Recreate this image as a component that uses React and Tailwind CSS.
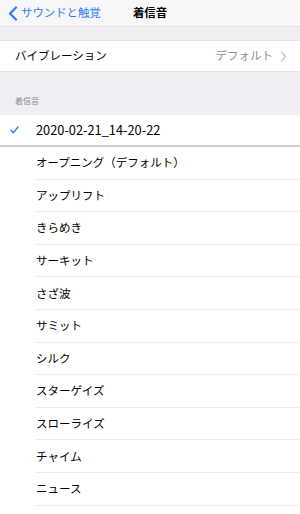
import React from 'react';

const tones = [
  'オープニング（デフォルト）',
  'アップリフト',
  'きらめき',
  'サーキット',
  'さざ波',
  'サミット',
  'シルク',
  'スターゲイズ',
  'スローライズ',
  'チャイム',
  'ニュース',
];

export default function App() {
  return (
    <div
      className="w-[300px] h-[514px] overflow-hidden bg-[#efeff4] text-black flex flex-col"
      style={{ fontFamily: '"Noto Sans CJK JP", "Noto Sans", sans-serif' }}
    >
      {/* nav bar */}
      <div className="relative h-[27px] shrink-0 bg-[#f7f7f7] border-b border-[#e2e2e6] flex items-center">
        <div className="flex items-center pl-[8px] text-[#2f7cf6] text-[11.4px] leading-none">
          <svg width="10" height="15" viewBox="0 0 10 15" className="mr-[3px]">
            <path d="M8 1.5 L2 7.5 L8 13.5" fill="none" stroke="#2f7cf6" strokeWidth="2.2" strokeLinecap="round" strokeLinejoin="round" />
          </svg>
          <span>サウンドと触覚</span>
        </div>
        <div className="absolute left-0 right-0 text-center text-[11.4px] font-bold leading-none pointer-events-none">着信音</div>
      </div>

      <div className="h-[13px] shrink-0" />

      {/* vibration */}
      <div className="h-[32px] shrink-0 bg-white border-y border-[#e4e4e8] flex items-center pl-[15px] pr-[13px]">
        <span className="text-[11.5px] flex-1">バイブレーション</span>
        <span className="text-[11.5px] text-[#8e8e93]">デフォルト</span>
        <svg width="7" height="11" viewBox="0 0 7 11" className="ml-[7px]">
          <path d="M1.5 1 L5.5 5.5 L1.5 10" fill="none" stroke="#c4c4c8" strokeWidth="1.3" strokeLinecap="round" strokeLinejoin="round" />
        </svg>
      </div>

      {/* section header */}
      <div className="h-[43px] shrink-0 flex items-end pl-[15px] pb-[10px]">
        <span className="text-[8px] text-[#8a8a8e] leading-none">着信音</span>
      </div>

      {/* list */}
      <div className="bg-white flex-1">
        <div className="h-[32px] flex items-center border-b-2 border-[#cfcfd3]">
          <div className="w-[36px] flex justify-center pr-[7px]">
            <svg width="9" height="8" viewBox="0 0 9 8">
              <path d="M1 4.3 L3.4 6.8 L8 1" fill="none" stroke="#2f7cf6" strokeWidth="1.4" strokeLinecap="round" strokeLinejoin="round" />
            </svg>
          </div>
          <span className="text-[12.8px]">2020-02-21_14-20-22</span>
        </div>
        {tones.map((t) => (
          <div key={t} className="pl-[36px]">
            <div className="h-[32.6px] flex items-center border-b border-[#ececee] text-[11.5px]">
              {t}
            </div>
          </div>
        ))}
      </div>
    </div>
  );
}
